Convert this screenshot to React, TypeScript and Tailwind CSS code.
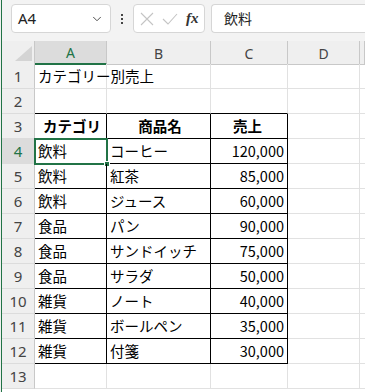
import { ChevronDown } from "lucide-react";

const GREEN = "#217346";
const COLS = ["A", "B", "C", "D", ""];

type Row = { a?: string; b?: string; c?: string; head?: boolean };

const ROWS: Row[] = [
  { a: "カテゴリー別売上" },
  {},
  { a: "カテゴリ", b: "商品名", c: "売上", head: true },
  { a: "飲料", b: "コーヒー", c: "120,000" },
  { a: "飲料", b: "紅茶", c: "85,000" },
  { a: "飲料", b: "ジュース", c: "60,000" },
  { a: "食品", b: "パン", c: "90,000" },
  { a: "食品", b: "サンドイッチ", c: "75,000" },
  { a: "食品", b: "サラダ", c: "50,000" },
  { a: "雑貨", b: "ノート", c: "40,000" },
  { a: "雑貨", b: "ボールペン", c: "35,000" },
  { a: "雑貨", b: "付箋", c: "30,000" },
  {},
];

const cellFont = { fontFamily: '"Noto Sans CJK JP", "Noto Sans", sans-serif' };
const uiFont = { fontFamily: '"Noto Sans", "Open Sans", sans-serif' };

function Toolbar() {
  return (
    <div className="flex h-[41px] items-start bg-[#f3f3f3] pt-[4px]">
      <div className="ml-[9px] flex h-[29px] w-[100px] items-center justify-between rounded-[4px] border border-[#d6d6d6] bg-white pl-[6px] pr-[6px]">
        <span className="text-[15px] text-[#222]" style={uiFont}>A4</span>
        <ChevronDown className="h-[14px] w-[14px] text-[#444]" strokeWidth={1.6} />
      </div>
      <div className="flex h-[29px] w-[22px] flex-col items-center justify-center gap-[2px]">
        <span className="h-[2px] w-[2px] bg-[#444]" />
        <span className="h-[2px] w-[2px] bg-[#444]" />
        <span className="h-[2px] w-[2px] bg-[#444]" />
      </div>
      <div className="flex h-[29px] w-[72px] items-center rounded-[4px] border border-[#d6d6d6] bg-white pl-[6px]">
        <svg width="14" height="14" viewBox="0 0 14 14" className="mr-[8px]">
          <path d="M1 1 L13 13 M13 1 L1 13" stroke="#c4c4c4" strokeWidth="1.1" fill="none" />
        </svg>
        <svg width="16" height="12" viewBox="0 0 16 12" className="mr-[8px]">
          <path d="M1 6 L6 11 L15 1" stroke="#c4c4c4" strokeWidth="1.1" fill="none" />
        </svg>
        <span
          className="text-[15px] font-bold italic leading-none text-[#333]"
          style={{ fontFamily: '"Liberation Serif", serif' }}
        >
          fx
        </span>
      </div>
      <div className="ml-[6px] flex h-[29px] flex-1 items-center rounded-l-[4px] border border-r-0 border-[#d6d6d6] bg-white pl-[12px]">
        <span className="text-[14px] text-[#222]" style={cellFont}>飲料</span>
      </div>
    </div>
  );
}

function HeaderRow() {
  return (
    <div className="grid h-[23px] grid-cols-[33px_72px_104px_77px_72px_1fr] bg-[#efefef]" style={uiFont}>
      <div className="flex items-end justify-end border-r border-b border-[#c8c8c8] pb-[3px] pr-[2px]">
        <svg width="17" height="15" viewBox="0 0 17 15">
          <polygon points="17,0 17,15 0,15" fill="#d4d4d4" />
        </svg>
      </div>
      {COLS.map((c, i) =>
        i === 0 ? (
          <div
            key={i}
            className="flex items-center justify-center border-r border-b-2 border-r-[#c8c8c8] border-b-[#217346] bg-[#dcdcdc] pt-[1px] text-[14px] text-[#217346]"
          >
            {c}
          </div>
        ) : (
          <div
            key={i}
            className="flex items-center justify-center border-r border-b border-[#c8c8c8] pt-[1px] text-[14px] text-[#444]"
          >
            {c}
          </div>
        )
      )}
    </div>
  );
}

function GridRow({ r, n }: { r: Row; n: number }) {
  const inTable = n >= 3 && n <= 12;
  const topOfTable = n === 2;
  const selectedRow = n === 4;
  const edge = (col: number) => {
    // col 0..2 = A..C
    if (inTable) return "border-r border-b border-black";
    if (topOfTable && col <= 2) return "border-r border-b border-r-[#e1e1e1] border-b-black";
    return "border-r border-b border-[#e1e1e1]";
  };
  const text = r.head ? "justify-center font-bold" : "";
  return (
    <div className="grid h-[25px] grid-cols-[33px_72px_104px_77px_72px_1fr] text-[14.5px] text-black" style={cellFont}>
      <div
        className={
          "flex items-center justify-center border-r border-b border-r-[#c8c8c8] border-b-[#dcdcdc] text-[15px] " +
          (selectedRow ? "bg-[#dcdcdc] text-[#217346]" : "bg-[#efefef] text-[#444]")
        }
        style={uiFont}
      >
        {n}
      </div>
      <div className={`relative flex items-center whitespace-nowrap pl-[3px] ${edge(0)} ${text}`}>
        {r.a}
        {selectedRow && (
          <>
            <div className="pointer-events-none absolute -top-[1px] -left-[1px] -right-[2px] -bottom-[2px] border-2" style={{ borderColor: GREEN }} />
            <div className="absolute -bottom-[4px] -right-[4px] h-[6px] w-[6px] border border-white" style={{ background: GREEN }} />
          </>
        )}
      </div>
      <div className={`flex items-center whitespace-nowrap pl-[3px] ${edge(1)} ${text}`}>{r.b}</div>
      <div
        className={`flex items-center whitespace-nowrap pr-[3px] ${edge(2)} ${
          r.head ? "justify-center font-bold" : "justify-end"
        }`}
      >
        {r.c}
      </div>
      <div className="border-r border-b border-[#e1e1e1]" />
      <div className="border-b border-[#e1e1e1]" />
    </div>
  );
}

export default function App() {
  return (
    <div className="flex h-[392px] w-[365px] overflow-hidden bg-white">
      <div className="w-px bg-[#f0f0f0]" />
      <div className="w-px bg-[#217346]" />
      <div className="flex min-w-0 flex-1 flex-col">
        <Toolbar />
        <HeaderRow />
        {ROWS.map((r, i) => (
          <GridRow key={i} r={r} n={i + 1} />
        ))}
      </div>
    </div>
  );
}
